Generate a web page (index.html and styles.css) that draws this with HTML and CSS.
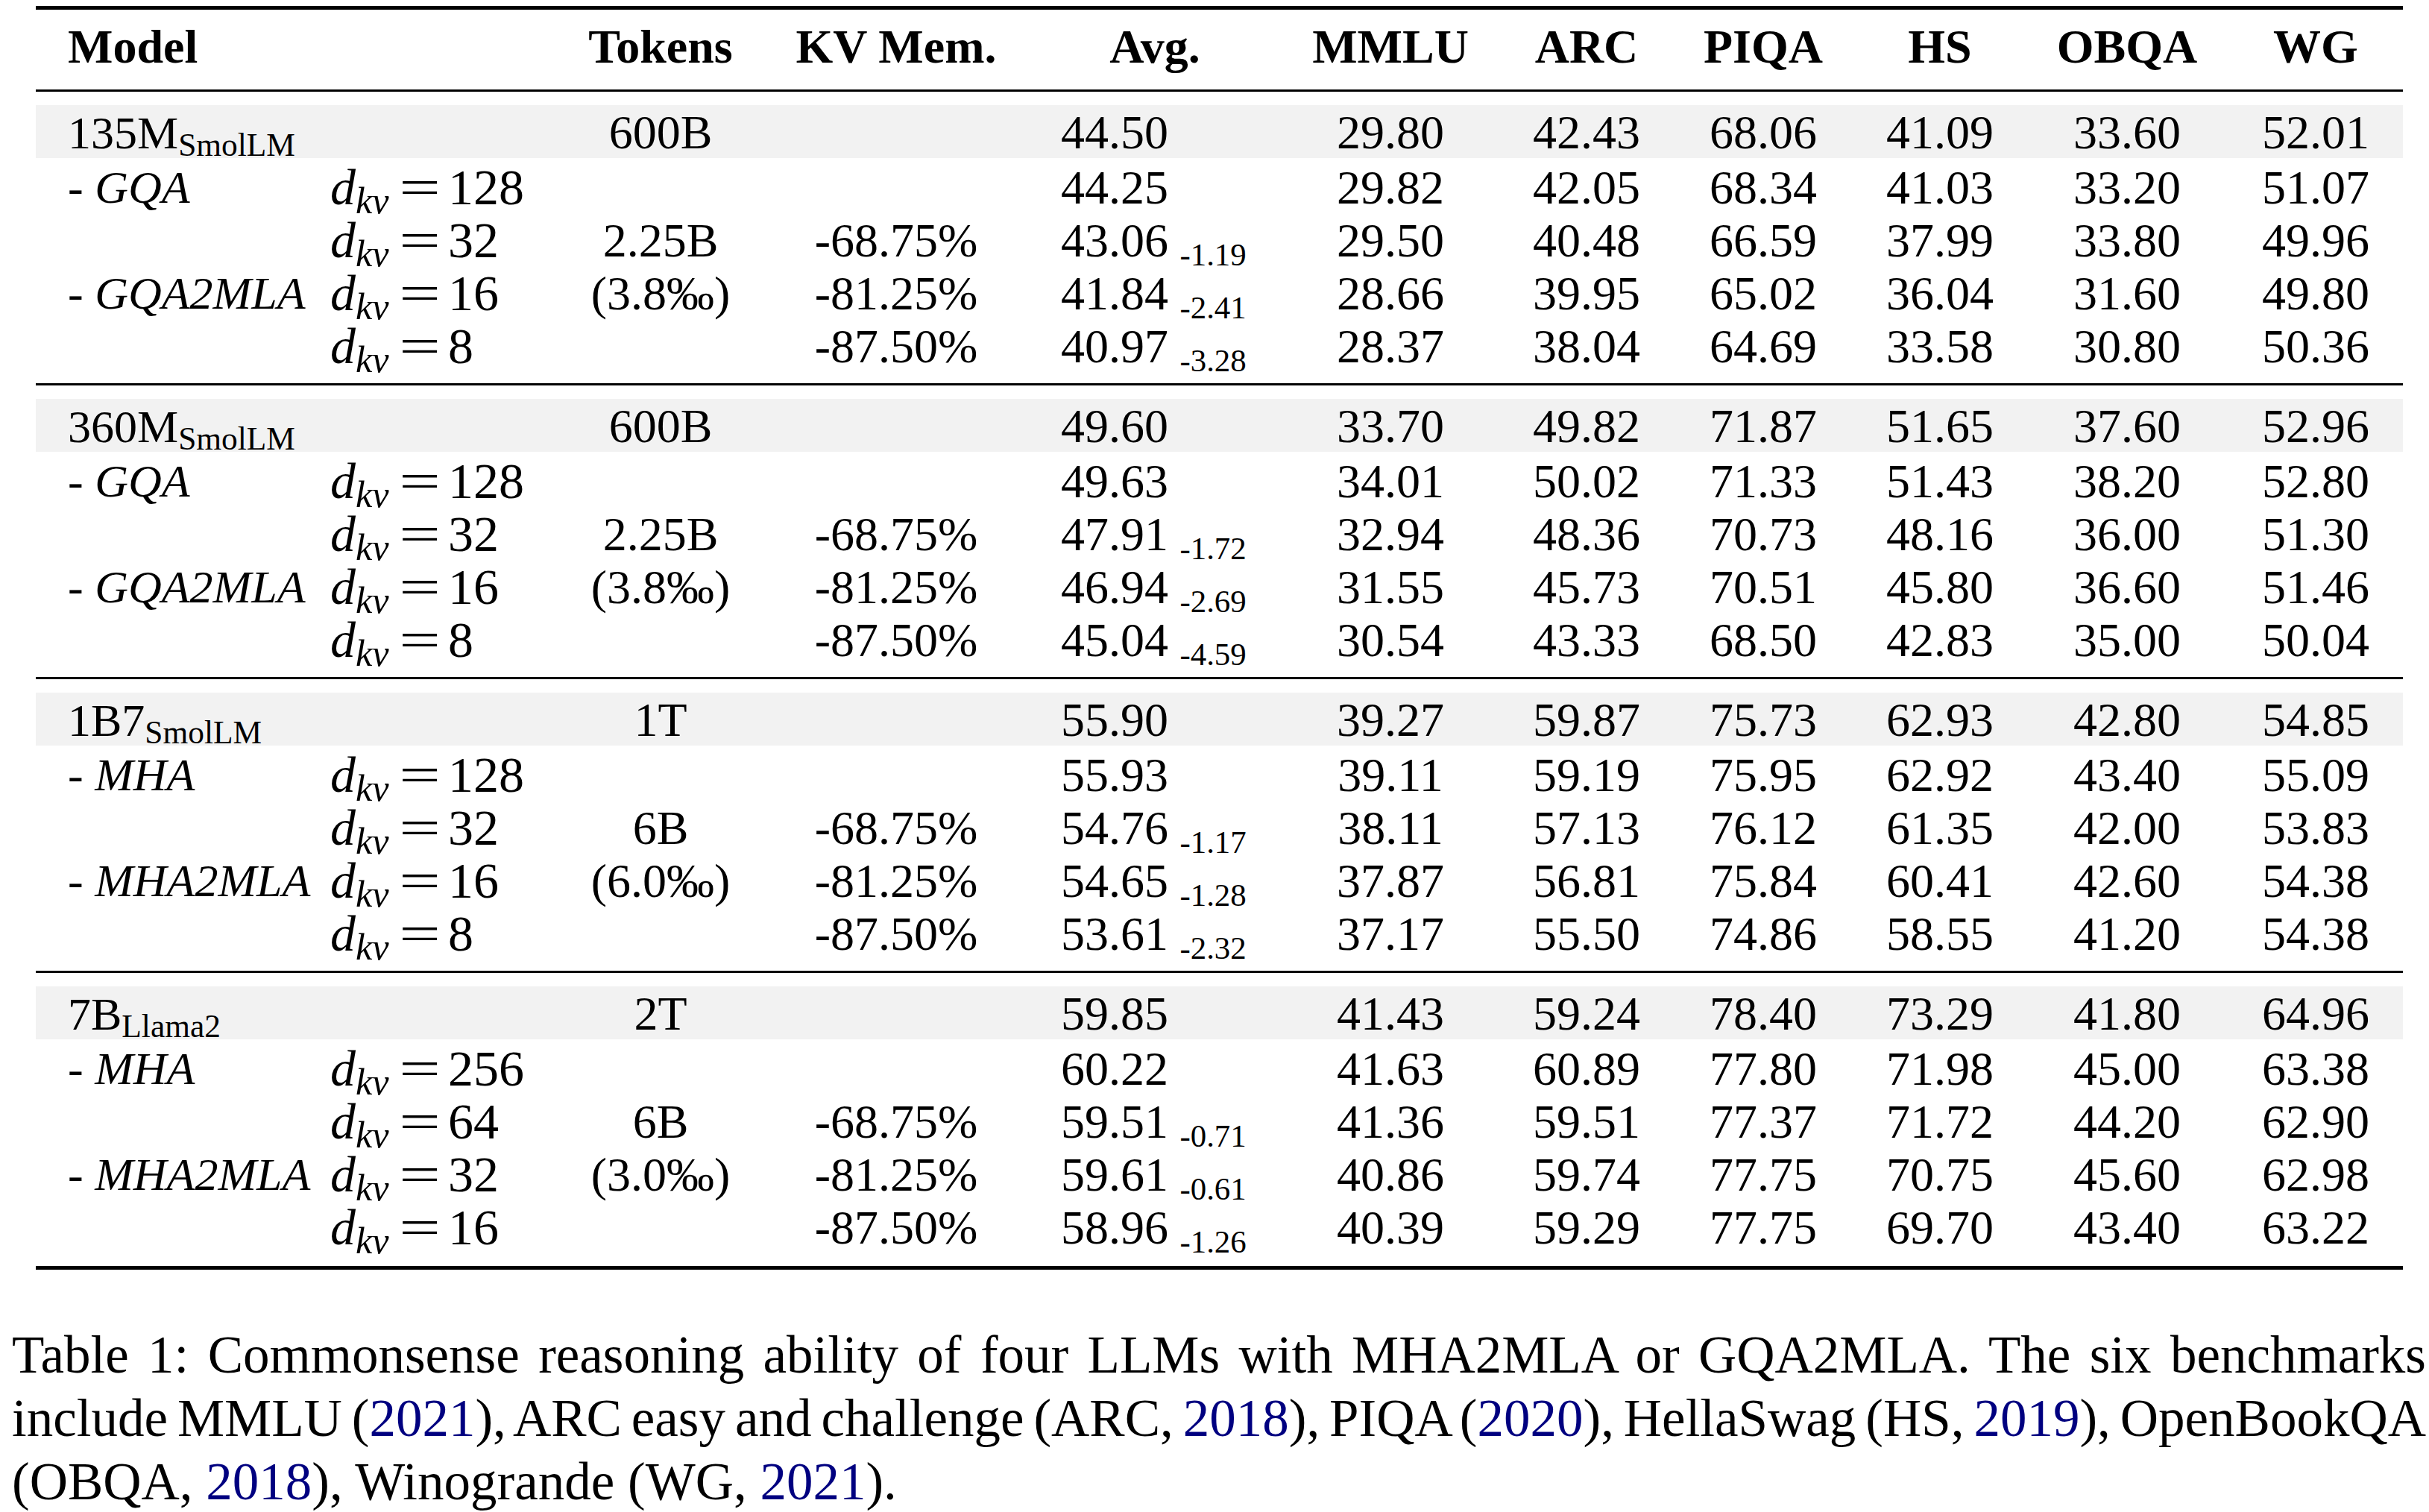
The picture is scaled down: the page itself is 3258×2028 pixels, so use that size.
FILE: index.html
```html
<!DOCTYPE html>
<html>
<head>
<meta charset="utf-8">
<link rel="stylesheet" href="styles.css">
</head>
<body>
<div class="page">
  <div class="tbl">
    <div class="row head">
      <div class="model span2">Model</div>
      <div class="c">Tokens</div>
      <div class="c">KV Mem.</div>
      <div class="c">Avg.</div>
      <div class="c">MMLU</div>
      <div class="c">ARC</div>
      <div class="c">PIQA</div>
      <div class="c">HS</div>
      <div class="c">OBQA</div>
      <div class="c wg">WG</div>
    </div>

    <div class="group">
      <div class="row shade">
        <div class="model span2">135M<sub>SmolLM</sub></div>
        <div class="c">600B</div><div class="c"></div>
        <div class="avg">44.50</div>
        <div class="c">29.80</div><div class="c">42.43</div><div class="c">68.06</div><div class="c">41.09</div><div class="c">33.60</div><div class="c wg">52.01</div>
      </div>
      <div class="row">
        <div class="model">- <i>GQA</i></div>
        <div class="dkv"><i>d</i><sub><i>kv</i></sub><span class="eq">=</span>128</div>
        <div class="c"></div><div class="c"></div>
        <div class="avg">44.25</div>
        <div class="c">29.82</div><div class="c">42.05</div><div class="c">68.34</div><div class="c">41.03</div><div class="c">33.20</div><div class="c wg">51.07</div>
      </div>
      <div class="row">
        <div class="model"></div>
        <div class="dkv"><i>d</i><sub><i>kv</i></sub><span class="eq">=</span>32</div>
        <div class="c">2.25B</div><div class="c">-68.75%</div>
        <div class="avg">43.06<span class="delta">-1.19</span></div>
        <div class="c">29.50</div><div class="c">40.48</div><div class="c">66.59</div><div class="c">37.99</div><div class="c">33.80</div><div class="c wg">49.96</div>
      </div>
      <div class="row">
        <div class="model">- <i>GQA2MLA</i></div>
        <div class="dkv"><i>d</i><sub><i>kv</i></sub><span class="eq">=</span>16</div>
        <div class="c">(3.8‰)</div><div class="c">-81.25%</div>
        <div class="avg">41.84<span class="delta">-2.41</span></div>
        <div class="c">28.66</div><div class="c">39.95</div><div class="c">65.02</div><div class="c">36.04</div><div class="c">31.60</div><div class="c wg">49.80</div>
      </div>
      <div class="row">
        <div class="model"></div>
        <div class="dkv"><i>d</i><sub><i>kv</i></sub><span class="eq">=</span>8</div>
        <div class="c"></div><div class="c">-87.50%</div>
        <div class="avg">40.97<span class="delta">-3.28</span></div>
        <div class="c">28.37</div><div class="c">38.04</div><div class="c">64.69</div><div class="c">33.58</div><div class="c">30.80</div><div class="c wg">50.36</div>
      </div>
    </div>

    <div class="group">
      <div class="row shade">
        <div class="model span2">360M<sub>SmolLM</sub></div>
        <div class="c">600B</div><div class="c"></div>
        <div class="avg">49.60</div>
        <div class="c">33.70</div><div class="c">49.82</div><div class="c">71.87</div><div class="c">51.65</div><div class="c">37.60</div><div class="c wg">52.96</div>
      </div>
      <div class="row">
        <div class="model">- <i>GQA</i></div>
        <div class="dkv"><i>d</i><sub><i>kv</i></sub><span class="eq">=</span>128</div>
        <div class="c"></div><div class="c"></div>
        <div class="avg">49.63</div>
        <div class="c">34.01</div><div class="c">50.02</div><div class="c">71.33</div><div class="c">51.43</div><div class="c">38.20</div><div class="c wg">52.80</div>
      </div>
      <div class="row">
        <div class="model"></div>
        <div class="dkv"><i>d</i><sub><i>kv</i></sub><span class="eq">=</span>32</div>
        <div class="c">2.25B</div><div class="c">-68.75%</div>
        <div class="avg">47.91<span class="delta">-1.72</span></div>
        <div class="c">32.94</div><div class="c">48.36</div><div class="c">70.73</div><div class="c">48.16</div><div class="c">36.00</div><div class="c wg">51.30</div>
      </div>
      <div class="row">
        <div class="model">- <i>GQA2MLA</i></div>
        <div class="dkv"><i>d</i><sub><i>kv</i></sub><span class="eq">=</span>16</div>
        <div class="c">(3.8‰)</div><div class="c">-81.25%</div>
        <div class="avg">46.94<span class="delta">-2.69</span></div>
        <div class="c">31.55</div><div class="c">45.73</div><div class="c">70.51</div><div class="c">45.80</div><div class="c">36.60</div><div class="c wg">51.46</div>
      </div>
      <div class="row">
        <div class="model"></div>
        <div class="dkv"><i>d</i><sub><i>kv</i></sub><span class="eq">=</span>8</div>
        <div class="c"></div><div class="c">-87.50%</div>
        <div class="avg">45.04<span class="delta">-4.59</span></div>
        <div class="c">30.54</div><div class="c">43.33</div><div class="c">68.50</div><div class="c">42.83</div><div class="c">35.00</div><div class="c wg">50.04</div>
      </div>
    </div>

    <div class="group">
      <div class="row shade">
        <div class="model span2">1B7<sub>SmolLM</sub></div>
        <div class="c">1T</div><div class="c"></div>
        <div class="avg">55.90</div>
        <div class="c">39.27</div><div class="c">59.87</div><div class="c">75.73</div><div class="c">62.93</div><div class="c">42.80</div><div class="c wg">54.85</div>
      </div>
      <div class="row">
        <div class="model">- <i>MHA</i></div>
        <div class="dkv"><i>d</i><sub><i>kv</i></sub><span class="eq">=</span>128</div>
        <div class="c"></div><div class="c"></div>
        <div class="avg">55.93</div>
        <div class="c">39.11</div><div class="c">59.19</div><div class="c">75.95</div><div class="c">62.92</div><div class="c">43.40</div><div class="c wg">55.09</div>
      </div>
      <div class="row">
        <div class="model"></div>
        <div class="dkv"><i>d</i><sub><i>kv</i></sub><span class="eq">=</span>32</div>
        <div class="c">6B</div><div class="c">-68.75%</div>
        <div class="avg">54.76<span class="delta">-1.17</span></div>
        <div class="c">38.11</div><div class="c">57.13</div><div class="c">76.12</div><div class="c">61.35</div><div class="c">42.00</div><div class="c wg">53.83</div>
      </div>
      <div class="row">
        <div class="model">- <i>MHA2MLA</i></div>
        <div class="dkv"><i>d</i><sub><i>kv</i></sub><span class="eq">=</span>16</div>
        <div class="c">(6.0‰)</div><div class="c">-81.25%</div>
        <div class="avg">54.65<span class="delta">-1.28</span></div>
        <div class="c">37.87</div><div class="c">56.81</div><div class="c">75.84</div><div class="c">60.41</div><div class="c">42.60</div><div class="c wg">54.38</div>
      </div>
      <div class="row">
        <div class="model"></div>
        <div class="dkv"><i>d</i><sub><i>kv</i></sub><span class="eq">=</span>8</div>
        <div class="c"></div><div class="c">-87.50%</div>
        <div class="avg">53.61<span class="delta">-2.32</span></div>
        <div class="c">37.17</div><div class="c">55.50</div><div class="c">74.86</div><div class="c">58.55</div><div class="c">41.20</div><div class="c wg">54.38</div>
      </div>
    </div>

    <div class="group last">
      <div class="row shade">
        <div class="model span2">7B<sub>Llama2</sub></div>
        <div class="c">2T</div><div class="c"></div>
        <div class="avg">59.85</div>
        <div class="c">41.43</div><div class="c">59.24</div><div class="c">78.40</div><div class="c">73.29</div><div class="c">41.80</div><div class="c wg">64.96</div>
      </div>
      <div class="row">
        <div class="model">- <i>MHA</i></div>
        <div class="dkv"><i>d</i><sub><i>kv</i></sub><span class="eq">=</span>256</div>
        <div class="c"></div><div class="c"></div>
        <div class="avg">60.22</div>
        <div class="c">41.63</div><div class="c">60.89</div><div class="c">77.80</div><div class="c">71.98</div><div class="c">45.00</div><div class="c wg">63.38</div>
      </div>
      <div class="row">
        <div class="model"></div>
        <div class="dkv"><i>d</i><sub><i>kv</i></sub><span class="eq">=</span>64</div>
        <div class="c">6B</div><div class="c">-68.75%</div>
        <div class="avg">59.51<span class="delta">-0.71</span></div>
        <div class="c">41.36</div><div class="c">59.51</div><div class="c">77.37</div><div class="c">71.72</div><div class="c">44.20</div><div class="c wg">62.90</div>
      </div>
      <div class="row">
        <div class="model">- <i>MHA2MLA</i></div>
        <div class="dkv"><i>d</i><sub><i>kv</i></sub><span class="eq">=</span>32</div>
        <div class="c">(3.0‰)</div><div class="c">-81.25%</div>
        <div class="avg">59.61<span class="delta">-0.61</span></div>
        <div class="c">40.86</div><div class="c">59.74</div><div class="c">77.75</div><div class="c">70.75</div><div class="c">45.60</div><div class="c wg">62.98</div>
      </div>
      <div class="row">
        <div class="model"></div>
        <div class="dkv"><i>d</i><sub><i>kv</i></sub><span class="eq">=</span>16</div>
        <div class="c"></div><div class="c">-87.50%</div>
        <div class="avg">58.96<span class="delta">-1.26</span></div>
        <div class="c">40.39</div><div class="c">59.29</div><div class="c">77.75</div><div class="c">69.70</div><div class="c">43.40</div><div class="c wg">63.22</div>
      </div>
    </div>
  </div>

  <div class="cap">
    <div class="line">Table 1: Commonsense reasoning ability of four LLMs with MHA2MLA or GQA2MLA. The six benchmarks</div>
    <div class="line">include MMLU (<span class="cite">2021</span>), ARC easy and challenge (ARC, <span class="cite">2018</span>), PIQA (<span class="cite">2020</span>), HellaSwag (HS, <span class="cite">2019</span>), OpenBookQA</div>
    <div class="line end">(OBQA, <span class="cite">2018</span>), Winogrande (WG, <span class="cite">2021</span>).</div>
  </div>
</div>
</body>
</html>
```

FILE: styles.css
```css
html, body {
  margin: 0;
  padding: 0;
  background: #ffffff;
}

body {
  font-family: "Liberation Serif", "Times New Roman", serif;
  color: #000000;
  width: 3258px;
  overflow: hidden;
}

.page {
  padding-top: 8px;
}

.tbl {
  margin-left: 48px;
  width: 3175px;
  border-top: 5px solid #000;
  border-bottom: 5px solid #000;
  font-size: 64px;
}

.row {
  display: grid;
  grid-template-columns: 382px 290px 332px 300px 394px 238px 288px 186px 288px 214px 263px;
  height: 71px;
  align-items: center;
  white-space: nowrap;
}

.head {
  height: 99px;
  padding-bottom: 8px;
  border-bottom: 3px solid #000;
  font-weight: bold;
  font-size: 64px;
}

.group {
  padding: 18px 0;
  border-bottom: 3px solid #000;
}

.group.last {
  border-bottom: none;
  padding-bottom: 20px;
}

.shade {
  background: #f2f2f2;
}

.span2 {
  grid-column: span 2;
}

.c {
  text-align: center;
}

.model {
  padding-left: 43px;
}

.group .model {
  font-size: 62px;
}

.dkv {
  padding-left: 13px;
  font-size: 68px;
}

.dkv sub {
  font-size: 0.74em;
}

.avg {
  padding-left: 71px;
}

.wg {
  padding-left: 29px;
}

sub {
  font-size: 0.7em;
  vertical-align: -0.24em;
  line-height: 0;
}

.eq {
  display: inline-block;
  transform: scaleX(1.45);
  margin: 0 19px 0 22px;
}

.delta {
  font-size: 0.67em;
  vertical-align: -0.3em;
  line-height: 0;
  margin-left: 0.36em;
}

.cap {
  margin: 72px 0 0 16px;
  width: 3238px;
  font-size: 71px;
  line-height: 85px;
}

.cap .line {
  text-align: justify;
  text-align-last: justify;
  white-space: nowrap;
  word-spacing: -0.1em;
}

.cap .line.end {
  text-align: left;
  text-align-last: left;
  word-spacing: 0;
}

.cite {
  color: #000080;
}
```
